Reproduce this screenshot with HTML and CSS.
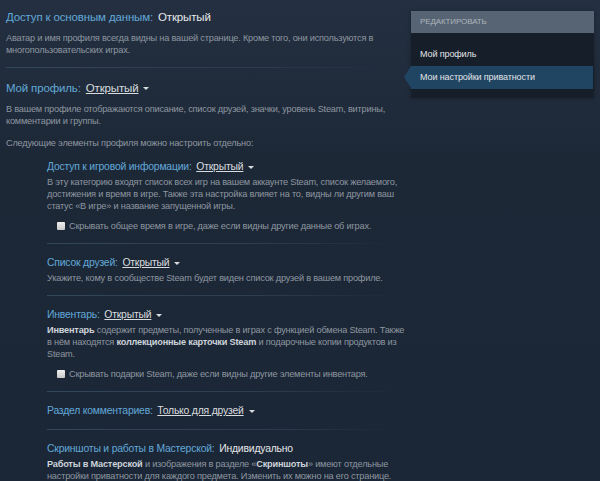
FILE: index.html
```html
<!DOCTYPE html>
<html lang="ru">
<head>
    <meta charset="UTF-8">
    <title>Настройки приватности</title>
    <link rel="stylesheet" href="styles.css">
</head>
<body>
    <div class="page">
        <div class="main">
            <div class="block">
                <div class="title">Доступ к основным данным: <span class="state">Открытый</span></div>
                <p class="desc">Аватар и имя профиля всегда видны на вашей странице. Кроме того, они используются в многопользовательских играх.</p>
            </div>
            <div class="sep"></div>
            <div class="block">
                <div class="title">Мой профиль: <span class="drop">Открытый</span><span class="arrow"></span></div>
                <p class="desc">В вашем профиле отображаются описание, список друзей, значки, уровень Steam, витрины, комментарии и группы.</p>
                <p class="desc next">Следующие элементы профиля можно настроить отдельно:</p>
            </div>

            <div class="sub">
                <div class="item">
                    <div class="title small">Доступ к игровой информации: <span class="drop">Открытый</span><span class="arrow"></span></div>
                    <p class="desc">В эту категорию входят список всех игр на вашем аккаунте Steam, список желаемого, достижения и время в игре. Также эта настройка влияет на то, видны ли другим ваш статус «В игре» и название запущенной игры.</p>
                    <label class="check"><span class="box"></span>Скрывать общее время в игре, даже если видны другие данные об играх.</label>
                </div>
                <div class="sep"></div>
                <div class="item">
                    <div class="title small">Список друзей: <span class="drop">Открытый</span><span class="arrow"></span></div>
                    <p class="desc">Укажите, кому в сообществе Steam будет виден список друзей в вашем профиле.</p>
                </div>
                <div class="sep"></div>
                <div class="item">
                    <div class="title small">Инвентарь: <span class="drop">Открытый</span><span class="arrow"></span></div>
                    <p class="desc"><b>Инвентарь</b> содержит предметы, полученные в играх с функцией обмена Steam. Также в нём находятся <b>коллекционные карточки Steam</b> и подарочные копии продуктов из Steam.</p>
                    <label class="check"><span class="box"></span>Скрывать подарки Steam, даже если видны другие элементы инвентаря.</label>
                </div>
                <div class="sep"></div>
                <div class="item">
                    <div class="title small">Раздел комментариев: <span class="drop">Только для друзей</span><span class="arrow"></span></div>
                </div>
                <div class="sep"></div>
                <div class="item">
                    <div class="title small">Скриншоты и работы в Мастерской: <span class="state">Индивидуально</span></div>
                    <p class="desc"><b>Работы в Мастерской</b> и изображения в разделе «<b>Скриншоты</b>» имеют отдельные настройки приватности для каждого предмета. Изменить их можно на его странице.</p>
                </div>
            </div>
        </div>

        <div class="side">
            <div class="side-head">РЕДАКТИРОВАТЬ</div>
            <ul class="side-menu">
                <li>Мой профиль</li>
                <li class="active">Мои настройки приватности</li>
            </ul>
        </div>
    </div>
</body>
</html>
```

FILE: styles.css
```css
*{
    margin: 0;
    padding: 0;
}
body{
    background: linear-gradient(to bottom, #243041 0px, #1d2837 160px, #1b2636 481px);
    font-family: "Liberation Sans", Arial, sans-serif;
    color: #8e97a0;
    height: 481px;
    overflow: hidden;
}
.page{
    display: flex;
    align-items: flex-start;
}
.main{
    width: 388px;
    padding-left: 6px;
    padding-top: 9px;
}
.title{
    font-size: 11.5px;
    letter-spacing: -0.15px;
    line-height: 16px;
    color: #62a9d9;
}
.title .state{
    color: #e6e8ea;
    margin-left: 2px;
}
.title .drop{
    color: #d8dcdf;
    text-decoration: underline;
    margin-left: 2px;
}
.arrow{
    display: inline-block;
    width: 0;
    height: 0;
    border-left: 3px solid transparent;
    border-right: 3px solid transparent;
    border-top: 3px solid #d8dcdf;
    margin-left: 5px;
    vertical-align: middle;
}
.desc{
    font-size: 9.2px;
    letter-spacing: -0.2px;
    line-height: 12px;
    margin-top: 7px;
}
.desc b{
    color: #cdd3d9;
}
.desc.next{
    margin-top: 10px;
}
.sep{
    height: 1px;
    background: linear-gradient(to right, #34465a 0%, #2d3d50 60%, rgba(45,61,80,0) 100%);
    margin: 11px 0 12px 0;
}
.sub{
    margin-left: 41px;
    margin-top: 11px;
    width: 362px;
}
.sub .sep{
    width: 350px;
}
.title.small{
    font-size: 10.4px;
    letter-spacing: -0.2px;
    line-height: 14px;
}
.item .desc{
    margin-top: 2px;
}
.check{
    display: flex;
    align-items: center;
    font-size: 9.2px;
    letter-spacing: -0.2px;
    line-height: 12px;
    margin-top: 8px;
    margin-left: 10px;
}
.check .box{
    width: 8px;
    height: 8px;
    background: linear-gradient(to bottom, #f0f0f0, #c8c8c8);
    border-radius: 1px;
    margin-right: 4px;
}
.side{
    width: 183px;
    margin-left: 17px;
    margin-top: 11px;
    background: #161e2a;
    box-shadow: 0 0 4px rgba(0,0,0,0.3);
}
.side-head{
    background: #576473;
    color: #aeb6be;
    font-size: 8px;
    letter-spacing: -0.1px;
    height: 22px;
    line-height: 22px;
    padding-left: 9px;
}
.side-menu{
    list-style: none;
    padding: 10px 0 9px 0;
}
.side-menu li{
    color: #e2e4e6;
    font-size: 9px;
    letter-spacing: -0.1px;
    height: 23px;
    line-height: 23px;
    padding-left: 9px;
    position: relative;
}
.side-menu .active{
    background: #1f4563;
    margin-right: 1px;
}
.side-menu .active::before{
    content: "";
    position: absolute;
    left: -7px;
    top: 0;
    border-top: 11.5px solid transparent;
    border-bottom: 11.5px solid transparent;
    border-right: 7px solid #1f4563;
}
```
